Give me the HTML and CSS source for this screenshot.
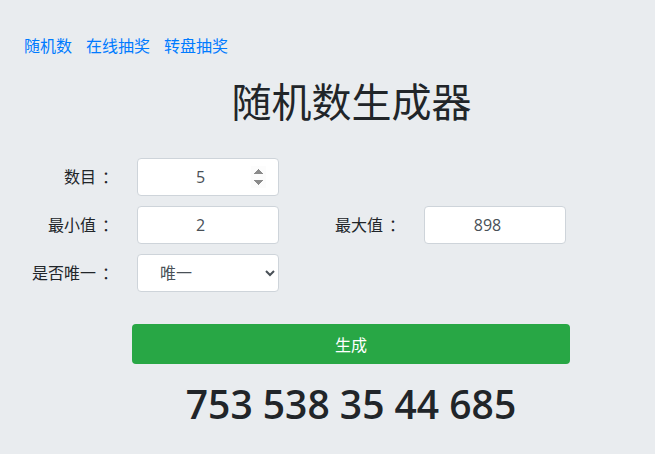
FILE: index.html
```html
<!doctype html>
<html lang="zh-CN">
  <head>
    <meta charset="UTF-8" />
    <meta name="viewport" content="width=device-width, initial-scale=1.0" />
    <title>随机数生成器</title>
    <link rel="stylesheet" href="styles.css">
  </head>
  <body>
    <nav class="top-nav">
      <a href="#">随机数</a>
      <a href="#">在线抽奖</a>
      <a href="#">转盘抽奖</a>
    </nav>

    <h1 class="page-title">随机数生成器</h1>

    <form class="gen-form">
      <label class="form-label" for="count">数目<span class="colon">：</span></label>
      <input class="form-input show-spin" id="count" type="number" value="5">
      <span></span>
      <span></span>

      <label class="form-label" for="min">最小值<span class="colon">：</span></label>
      <input class="form-input" id="min" type="number" value="2">
      <label class="form-label" for="max">最大值<span class="colon">：</span></label>
      <input class="form-input" id="max" type="number" value="898">

      <label class="form-label" for="unique">是否唯一<span class="colon">：</span></label>
      <select class="form-select" id="unique">
        <option>唯一</option>
        <option>可重复</option>
      </select>
    </form>

    <div class="panel">
      <button class="btn-generate" type="button">生成</button>
      <div class="result">753 538 35 44 685</div>
    </div>
  </body>
</html>
```

FILE: styles.css
```css
body {
  margin: 0;
  padding: 0;
  font-family: "Open Sans", "Noto Sans CJK SC", sans-serif;
  font-size: 16px;
  line-height: 1.5;
  color: #212529;
  background-color: #e9ecef;
}

/* Top links */
.top-nav {
  display: flex;
  gap: 14px;
  padding: 34px 0 0 24px;
}

.top-nav a {
  color: #007bff;
  text-decoration: none;
}

.page-title {
  margin: 20px 0 0 0;
  font-size: 40px;
  font-weight: 400;
  line-height: 48px;
  text-align: center;
  padding-left: 48px;
}

/* Form grid */
.gen-form {
  display: grid;
  grid-template-columns: 112px 142px 95px 142px;
  grid-auto-rows: 38px;
  column-gap: 25px;
  row-gap: 10px;
  margin-top: 32px;
}

.form-label {
  text-align: right;
  align-self: center;
}

/* centre the full-width colon in its box */
.colon {
  padding-left: 6px;
  margin-right: -6px;
}

.form-input,
.form-select {
  box-sizing: border-box;
  width: 142px;
  height: 38px;
  border: 1px solid #ced4da;
  border-radius: 4px;
  background-color: #fff;
  font-family: inherit;
  font-size: 16px;
  color: #495057;
}

.form-input {
  text-align: center;
  padding: 0 12px;
}

.show-spin::-webkit-inner-spin-button {
  opacity: 1;
}

.form-select {
  padding: 0 8px 0 18px;
}

/* Button and result */
.panel {
  width: 438px;
  margin: 32px 0 0 132px;
}

.btn-generate {
  display: block;
  width: 100%;
  height: 40px;
  border: none;
  border-radius: 4px;
  background-color: #28a745;
  color: #fff;
  font-family: inherit;
  font-size: 16px;
}

.result {
  margin-top: 16px;
  font-size: 39px;
  font-weight: 600;
  line-height: 48px;
  text-align: center;
}
```
